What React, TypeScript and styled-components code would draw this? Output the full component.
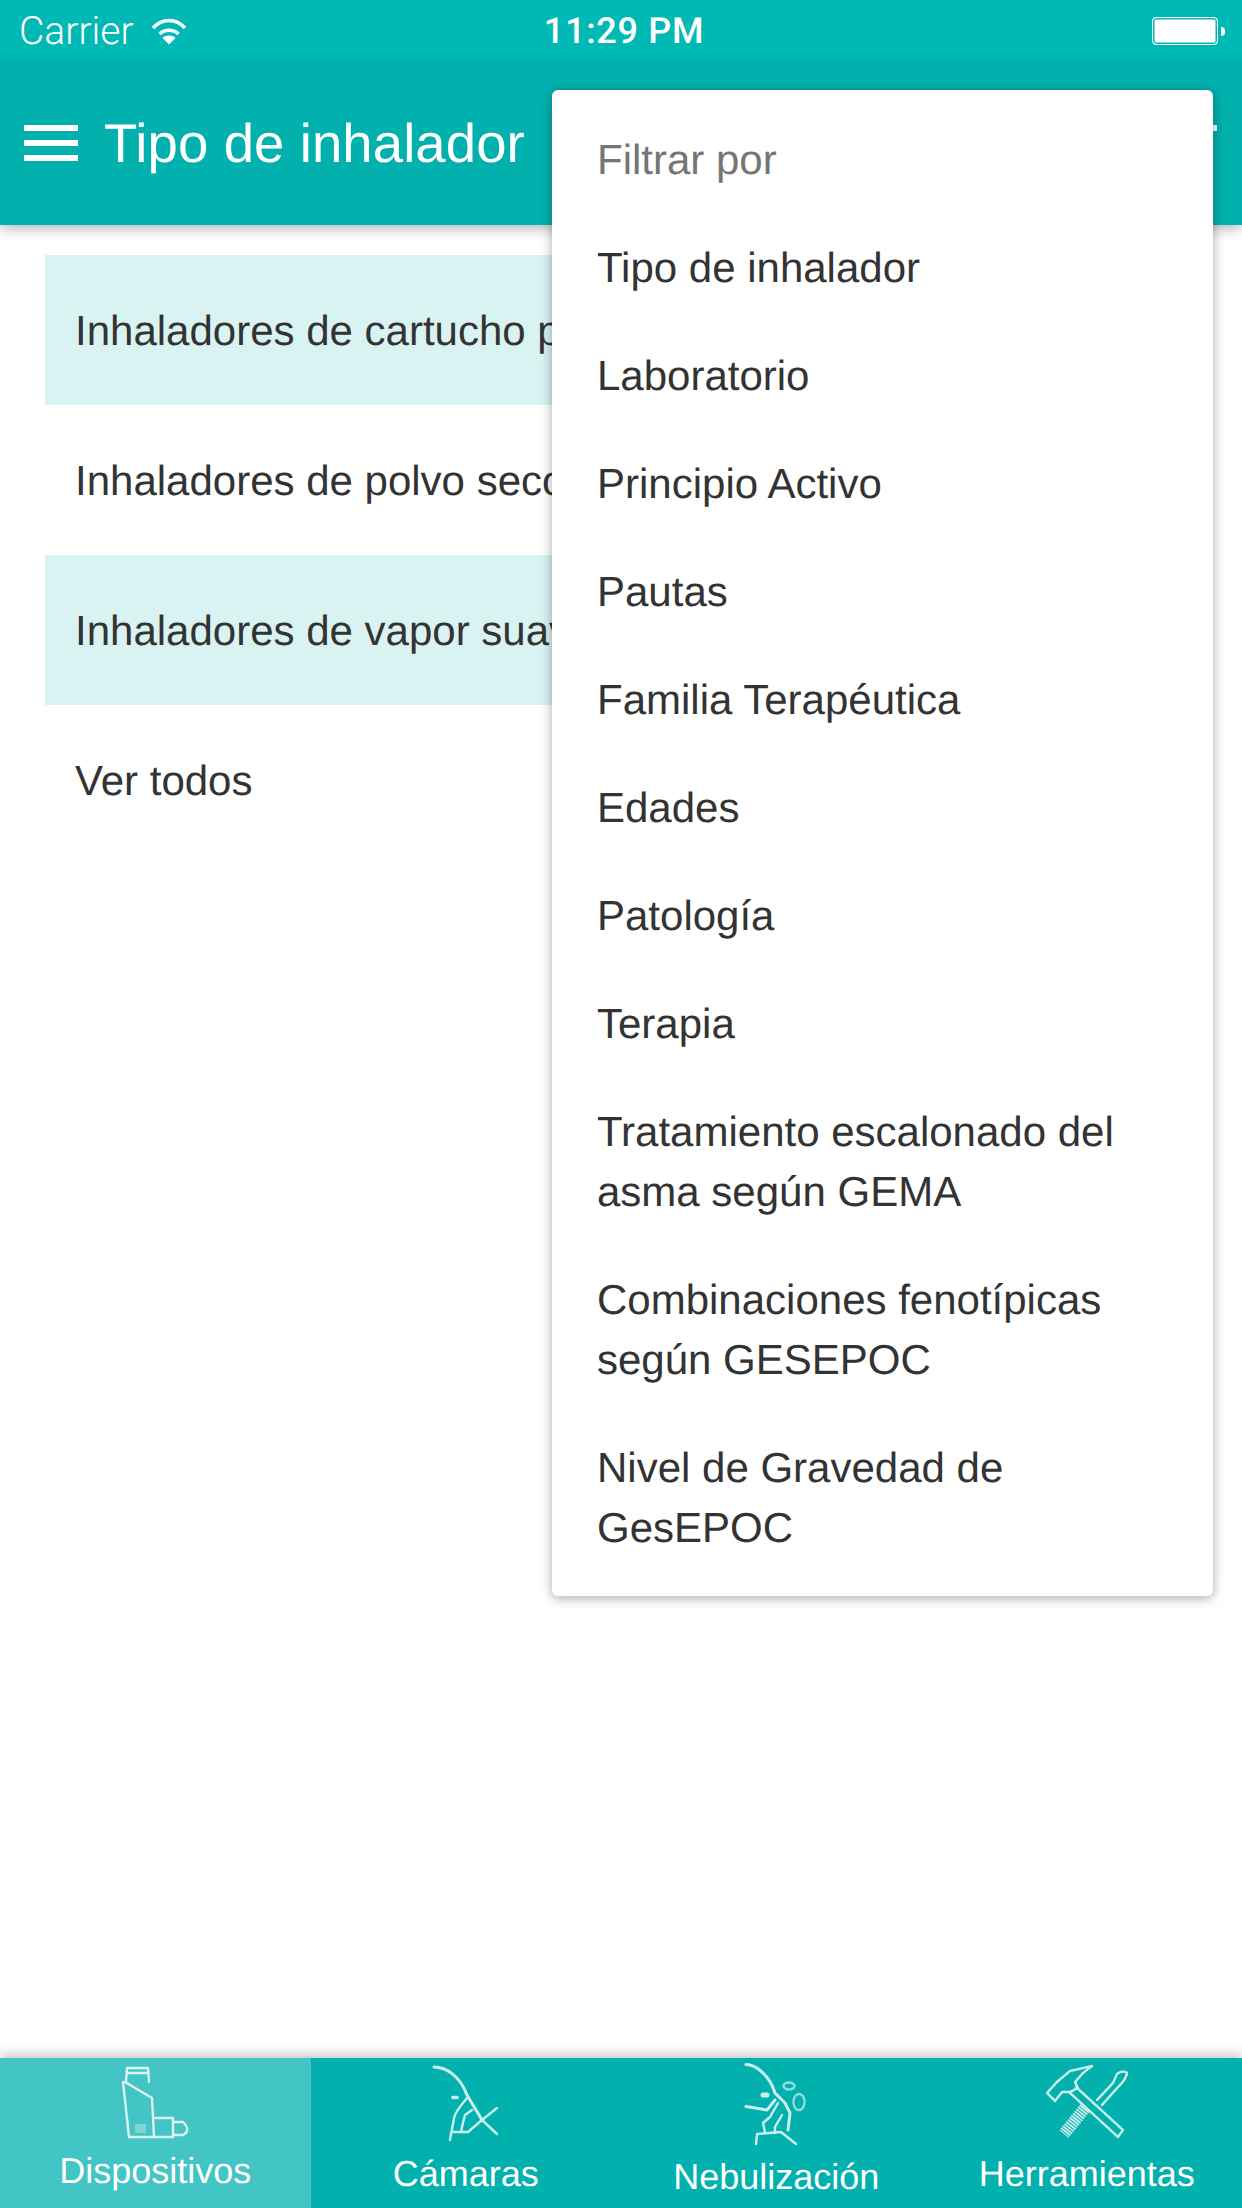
import React from "react";
import styled, { createGlobalStyle } from "styled-components";

const Global = createGlobalStyle`
  html, body { margin: 0; padding: 0; background: #fff; }
  body {
    font-family: "Liberation Sans", Arial, sans-serif;
    text-rendering: geometricPrecision;
  }
  * { box-sizing: border-box; }
`;

const Page = styled.div`
  position: relative;
  width: 1242px;
  height: 2208px;
  overflow: hidden;
  display: flex;
  flex-direction: column;
  background: #fff;
`;

const StatusBar = styled.div`
  height: 60px;
  flex: none;
  display: grid;
  grid-template-columns: 1fr auto 1fr;
  align-items: center;
  padding: 2px 17px 0 19px;
  background: #00b9b4;
  color: #fff;
  font-family: Roboto, "Liberation Sans", sans-serif;
  font-size: 36px;
  position: relative;
  z-index: 3;
`;

const Carrier = styled.div`
  display: flex;
  align-items: center;
  gap: 17px;
  font-size: 39px;
  font-weight: 300;
`;

const Clock = styled.div`
  font-weight: 500;
  letter-spacing: 0.7px;
  padding-left: 4px;
`;

const BatteryWrap = styled.div`
  justify-self: end;
  display: flex;
  align-items: center;
  gap: 3px;
`;

const BatteryBody = styled.div`
  width: 66px;
  height: 28px;
  background: #fff;
  border: 1px solid #fff;
  border-radius: 4px;
  box-shadow: inset 0 0 0 1.5px #00b9b4;
`;

const BatteryNub = styled.div`
  width: 4px;
  height: 9px;
  background: #fff;
  border-radius: 0 4px 4px 0;
`;

const Header = styled.header`
  height: 165px;
  flex: none;
  display: flex;
  align-items: center;
  padding: 1px 25px 0 24px;
  background: #02b1ae;
  box-shadow: 0 4px 12px rgba(0, 0, 0, 0.28);
  color: #fff;
  position: relative;
  z-index: 2;
`;

const Bars = styled.div<{ $right?: boolean }>`
  width: 54px;
  flex: none;
  display: flex;
  flex-direction: column;
  align-items: center;
  gap: 9px;
  margin-left: ${(p) => (p.$right ? "auto" : "0")};
`;

const Bar = styled.span<{ $w?: number }>`
  display: block;
  height: 6px;
  width: ${(p) => (p.$w ? `${p.$w}px` : "100%")};
  background: #fff;
`;

const Title = styled.h1`
  margin: 2px 0 0 26px;
  font-size: 54.5px;
  font-weight: 400;
  line-height: 64px;
  letter-spacing: 0.1px;
  white-space: nowrap;
`;

const Main = styled.main`
  flex: 1;
  padding: 30px 45px 0;
`;

const ListRow = styled.div<{ $tint?: boolean }>`
  height: 150px;
  display: flex;
  align-items: center;
  padding: 1px 30px 0;
  font-size: 42px;
  color: #333;
  white-space: nowrap;
  background: ${(p) => (p.$tint ? "#d9f3f2" : "transparent")};
`;

const TabBar = styled.nav`
  height: 150px;
  flex: none;
  display: grid;
  grid-template-columns: repeat(4, 1fr);
  background: #02b1ae;
  box-shadow: 0 -3px 12px rgba(0, 0, 0, 0.25);
  position: relative;
  z-index: 1;
`;

const Tab = styled.div<{ $active?: boolean }>`
  display: flex;
  flex-direction: column;
  align-items: center;
  padding-top: 4px;
  background: ${(p) => (p.$active ? "#42c5c4" : "transparent")};
  color: #fff;
`;

const TabIcon = styled.svg`
  width: 80px;
  height: 84px;
  flex: none;
  overflow: visible;
  fill: none;
  stroke: #fff;
  stroke-width: 2.4;
  stroke-linejoin: round;
  stroke-linecap: round;
  opacity: 0.8;
  filter: blur(0.5px);
`;

const TabLabel = styled.span<{ $drop: number }>`
  margin-top: ${(p) => p.$drop}px;
  font-size: 36px;
  line-height: 44px;
  white-space: nowrap;
`;

const Menu = styled.div`
  position: absolute;
  z-index: 4;
  top: 90px;
  left: 552px;
  width: 661px;
  padding: 15px 0;
  background: #fff;
  border-radius: 6px;
  box-shadow: 0 2px 12px rgba(0, 0, 0, 0.35);
`;

const MenuLabel = styled.div`
  height: 108px;
  display: flex;
  align-items: center;
  padding: 1px 45px 0;
  font-size: 42px;
  color: #757575;
`;

const MenuItem = styled.div`
  padding: 25px 45px 23px;
  font-size: 42px;
  line-height: 60px;
  color: #333;
`;

const rows = [
  "Inhaladores de cartucho presurizado",
  "Inhaladores de polvo seco",
  "Inhaladores de vapor suave",
  "Ver todos",
];

const menuItems = [
  "Tipo de inhalador",
  "Laboratorio",
  "Principio Activo",
  "Pautas",
  "Familia Terapéutica",
  "Edades",
  "Patología",
  "Terapia",
  "Tratamiento escalonado del asma según GEMA",
  "Combinaciones fenotípicas según GESEPOC",
  "Nivel de Gravedad de GesEPOC",
];

const WifiIcon = () => (
  <svg width="36" height="28" viewBox="0 0 36 28" fill="none" stroke="#fff" strokeWidth="3.6">
    <path d="M2 11 C11 1 25 1 34 11" />
    <path d="M8.5 17 C14 12 22 12 27.5 17" />
    <path d="M11.5 21 L18 27.5 L24.5 21 C21 17.8 15 17.8 11.5 21 Z" fill="#fff" stroke="none" />
  </svg>
);

const InhalerIcon = () => (
  <TabIcon viewBox="0 0 80 84">
    <path d="M11 20 L12 6 H33 L34 20" />
    <path d="M12 11 H33" />
    <path d="M8 20 L14 75 H58" />
    <path d="M10 20 L37 36 L39 75" />
    <path d="M39 56 H58 V75" />
    <path d="M58 60 H68 Q73 65 72 68 Q72 71 68 73 H58" />
    <rect x="20" y="62" width="11" height="9" fill="#fff" fillOpacity="0.4" stroke="none" />
  </TabIcon>
);

const CameraIcon = () => (
  <TabIcon viewBox="0 0 80 84">
    <path d="M8 5 C20 5 34 14 41 33 L56 58" strokeWidth="3" />
    <path d="M27 35.5 H31" strokeWidth="3.6" />
    <path d="M42 35 C36 42 30 48 28 56 C27 64 25 70 24 78" />
    <path d="M46 48 L39 53 C37 60 36 65 35 70" />
    <path d="M26 70 H42 L56 58 L71 46" />
    <path d="M56 58 L71 72" />
  </TabIcon>
);

const NebulizerIcon = () => (
  <TabIcon viewBox="0 0 80 84">
    <path d="M10 2.5 C20 2.5 34 14 39 31 L49 41 L54 51 L52 68" strokeWidth="3" />
    <path d="M27 33 H31" strokeWidth="5" />
    <path d="M10 44.5 L31 48 L39 38" strokeWidth="3" />
    <path d="M42 41 L34 55 L27 61 L29 70" />
    <path d="M46 53 L39 65 V71" />
    <path d="M20 82 L21 72 L45 70 L60 82" />
    <ellipse cx="63" cy="40" rx="5.5" ry="8" strokeDasharray="2.4 1.4" opacity="0.7" />
    <ellipse cx="53" cy="24" rx="5.5" ry="3.5" strokeDasharray="2.4 1.4" opacity="0.7" />
  </TabIcon>
);

const ToolsIcon = () => (
  <TabIcon viewBox="0 0 80 84">
    <path d="M0 31 L10 20 L23 9 L45 4 L36 11 L28 20 L31 26 L23 30 L15 30 L8 39 Z" strokeDasharray="2.4 0.8" />
    <path d="M29 25 L76 68 L71 75 L22 30" strokeDasharray="2.4 0.8" />
    <path d="M50 38 L66 21 L70 12 C74 9 78 9 80 11 C79 16 76 20 72 24 L55 43" strokeDasharray="2.4 0.8" />
    <path d="M38 46 L17 72" strokeWidth="12" strokeLinecap="butt" strokeDasharray="1.8 0.9" />
  </TabIcon>
);

export default function App() {
  return (
    <Page>
      <Global />
      <StatusBar>
        <Carrier>
          Carrier
          <WifiIcon />
        </Carrier>
        <Clock>11:29 PM</Clock>
        <BatteryWrap>
          <BatteryBody />
          <BatteryNub />
        </BatteryWrap>
      </StatusBar>
      <Header>
        <Bars>
          <Bar />
          <Bar />
          <Bar />
        </Bars>
        <Title>Tipo de inhalador</Title>
        <Bars $right>
          <Bar />
          <Bar $w={30} />
          <Bar $w={14} />
        </Bars>
      </Header>
      <Main>
        {rows.map((r, i) => (
          <ListRow key={r} $tint={i % 2 === 0 && i < 3}>
            {r}
          </ListRow>
        ))}
      </Main>
      <TabBar>
        <Tab $active>
          <InhalerIcon />
          <TabLabel $drop={3}>Dispositivos</TabLabel>
        </Tab>
        <Tab>
          <CameraIcon />
          <TabLabel $drop={6}>Cámaras</TabLabel>
        </Tab>
        <Tab>
          <NebulizerIcon />
          <TabLabel $drop={9}>Nebulización</TabLabel>
        </Tab>
        <Tab>
          <ToolsIcon />
          <TabLabel $drop={6}>Herramientas</TabLabel>
        </Tab>
      </TabBar>
      <Menu>
        <MenuLabel>Filtrar por</MenuLabel>
        {menuItems.map((m) => (
          <MenuItem key={m}>{m}</MenuItem>
        ))}
      </Menu>
    </Page>
  );
}
